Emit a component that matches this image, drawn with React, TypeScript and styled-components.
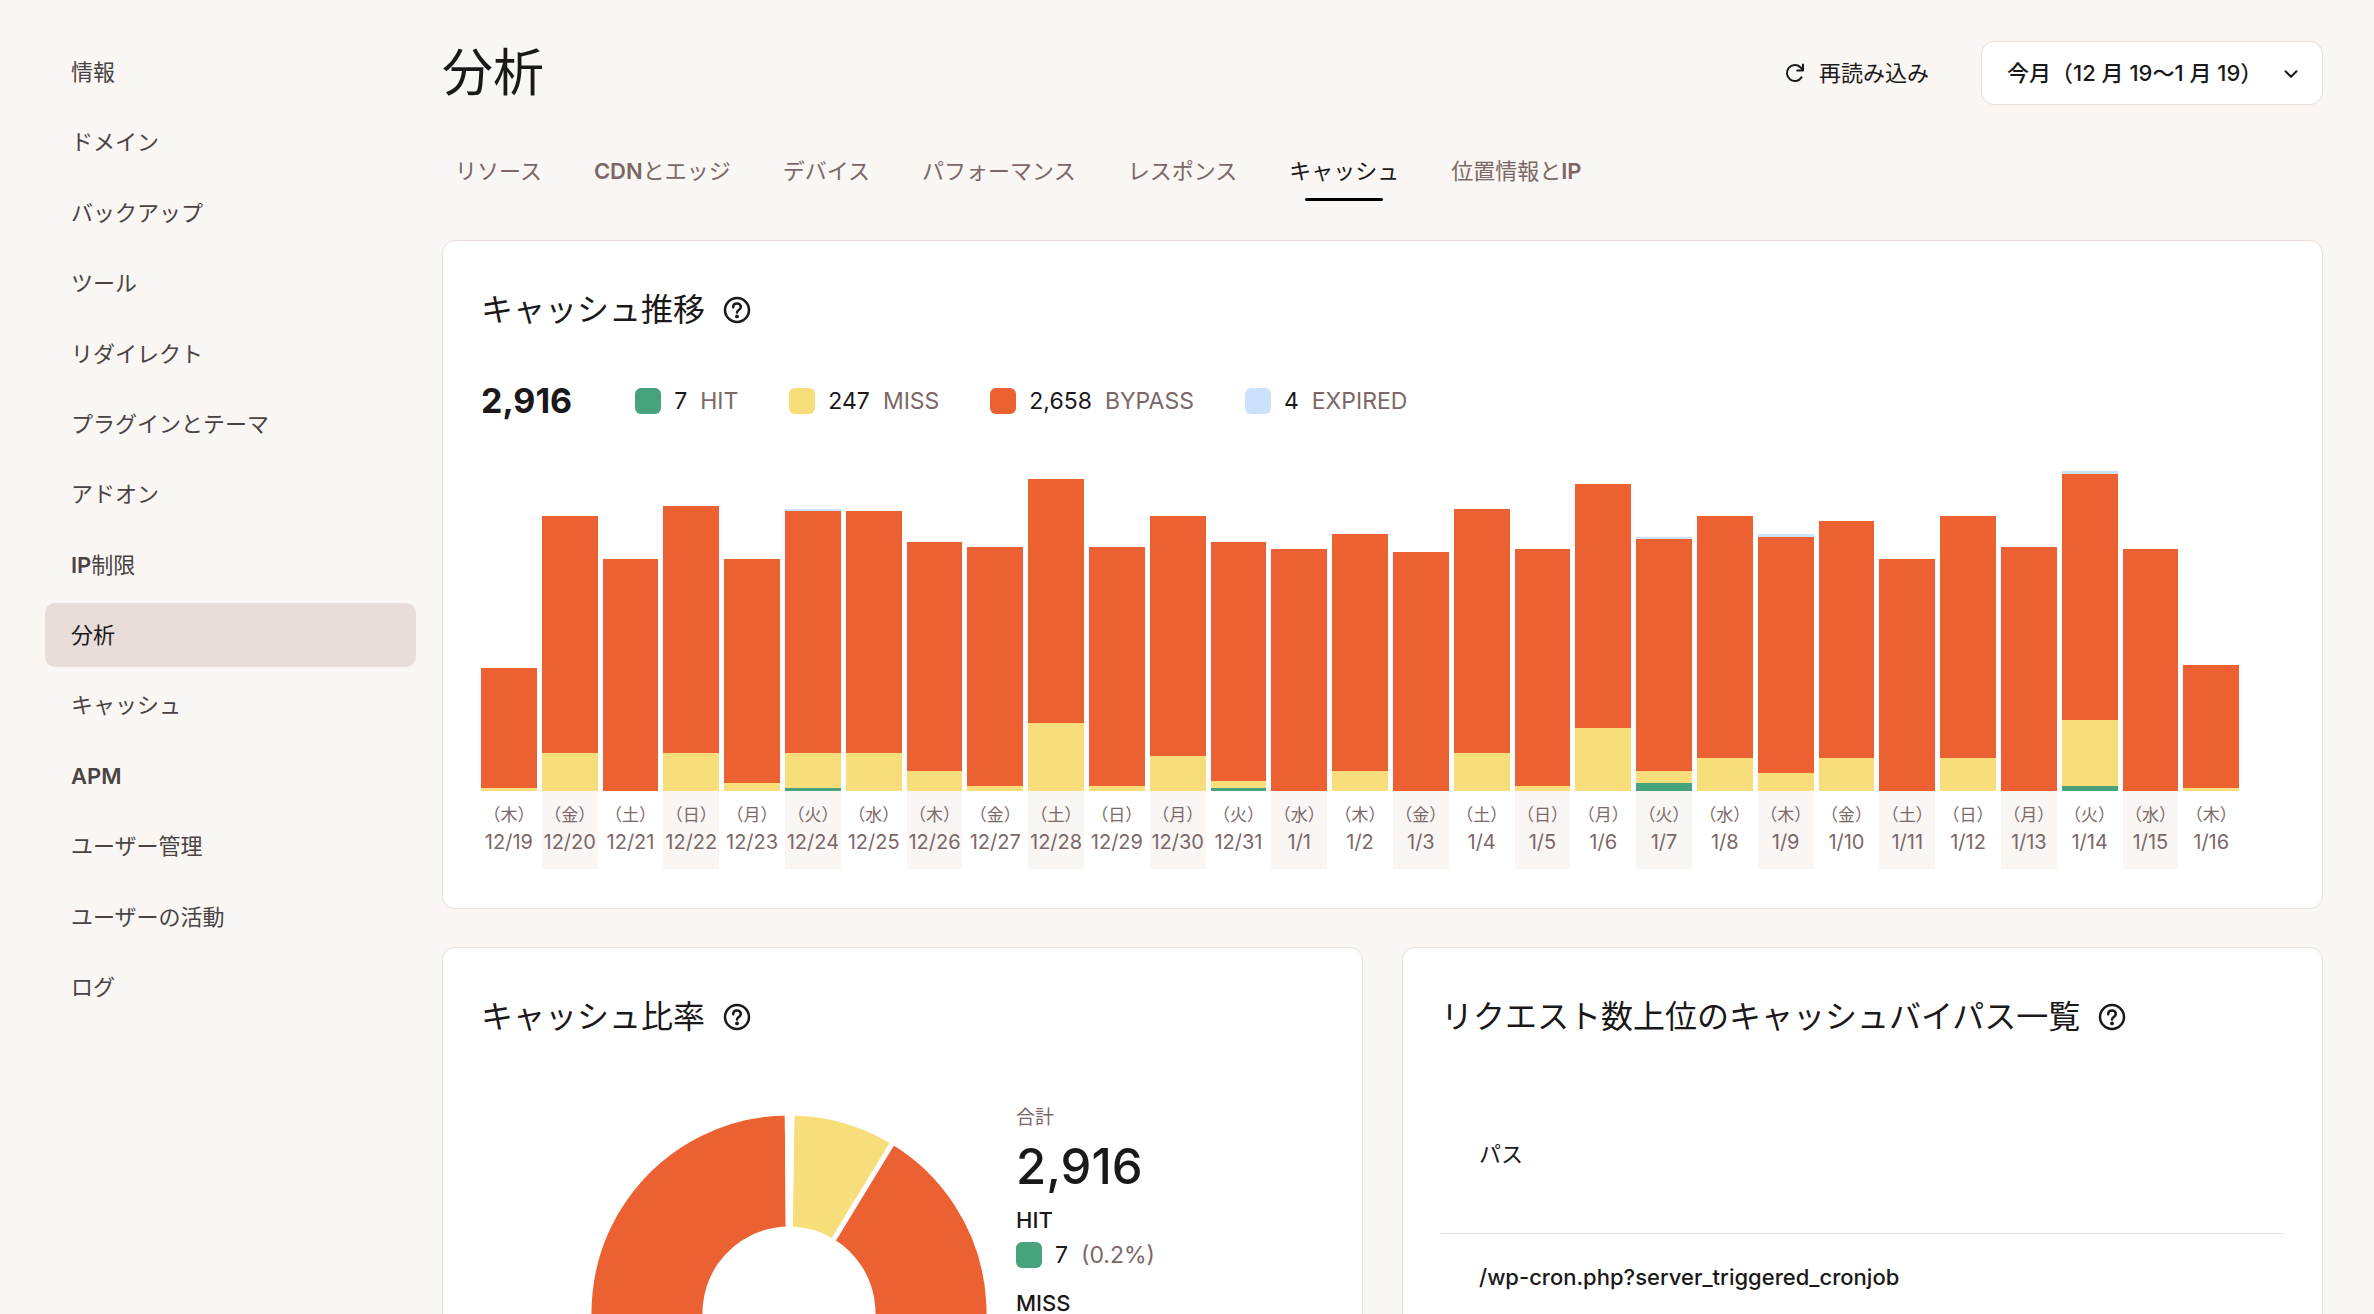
import React from 'react';
import styled, { createGlobalStyle } from 'styled-components';

const color = {
  page: '#f9f6f3',
  card: '#ffffff',
  border: '#e8ddd8',
  active: '#e8ddd9',
  stripe: '#f9f6f4',
  ink: '#1a1818',
  nav: '#4a4343',
  muted: '#7b6866',
  hit: '#48a27c',
  miss: '#f8de7b',
  bypass: '#ec6132',
  expired: '#cce2fb',
};

type Kind = 'hit' | 'miss' | 'bypass' | 'expired';

const GlobalStyle = createGlobalStyle`
  *, *::before, *::after { box-sizing: border-box; }
  body {
    margin: 0;
    background: ${color.page};
    color: ${color.ink};
    font-family: Inter, "Noto Sans CJK JP", sans-serif;
    font-size: 22px;
    line-height: 32px;
  }
  h1, h2, p, ul, dl, dd, figure { margin: 0; padding: 0; }
  button, select { font: inherit; color: inherit; }
`;

const Page = styled.div`
  display: flex;
  gap: 26px;
  height: 100vh;
  padding: 40px 51px 0 45px;
  overflow: hidden;
`;

const Sidebar = styled.nav`
  flex: 0 0 371px;
`;

const NavList = styled.ul`
  display: grid;
  grid-auto-rows: 64px;
  align-content: space-between;
  height: 979px;
  list-style: none;
`;

const NavLink = styled.a<{ $active?: boolean }>`
  display: flex;
  align-items: center;
  height: 100%;
  padding: 0 26px;
  border-radius: 10px;
  background: ${(p) => (p.$active ? color.active : 'transparent')};
  color: ${(p) => (p.$active ? color.ink : color.nav)};
  font-weight: 400;
  text-decoration: none;
`;

const Latin = styled.span`
  font-weight: 600;
`;

const Main = styled.main`
  flex: 1;
  min-width: 0;
`;

const Header = styled.header`
  display: flex;
  align-items: center;
  justify-content: space-between;
  height: 66px;
`;

const Title = styled.h1`
  font-size: 51px;
  font-weight: 400;
  line-height: 64px;
`;

const Actions = styled.div`
  display: flex;
  align-items: center;
  gap: 26px;
`;

const RefreshButton = styled.button`
  display: flex;
  align-items: center;
  gap: 14px;
  height: 64px;
  padding: 0 26px;
  border: 0;
  background: none;
`;

const SelectBox = styled.div`
  position: relative;
  width: 342px;

  svg {
    position: absolute;
    top: 25px;
    right: 24px;
    pointer-events: none;
  }
`;

const PeriodSelect = styled.select`
  appearance: none;
  width: 100%;
  height: 64px;
  padding: 0 48px 0 25px;
  border: 1px solid ${color.border};
  border-radius: 13px;
  background: ${color.card};
  font-weight: 500;
`;

const Tabs = styled.nav`
  display: flex;
  gap: 26px;
  margin: 45px 0 39px;
`;

const Tab = styled.a<{ $active?: boolean }>`
  display: flex;
  justify-content: center;
  height: 50px;
  padding: 4px 13px 0;
  position: relative;
  color: ${(p) => (p.$active ? color.ink : color.muted)};
  font-weight: 400;
  text-decoration: none;

  &::after {
    content: '';
    display: ${(p) => (p.$active ? 'block' : 'none')};
    position: absolute;
    bottom: 0;
    left: 29px;
    right: 29px;
    height: 3px;
    border-radius: 2px;
    background: #000;
  }
`;

const Card = styled.section`
  min-width: 0;
  padding: 45px 38px 39px;
  border: 1px solid ${color.border};
  border-radius: 13px;
  background: ${color.card};
`;

const CardHead = styled.div`
  display: flex;
  align-items: center;
  gap: 18px;
`;

const CardTitle = styled.h2`
  font-size: 32px;
  font-weight: 400;
  line-height: 48px;
`;

const HelpButton = styled.button`
  display: flex;
  padding: 0;
  border: 0;
  background: none;
`;

const Legend = styled.div`
  display: flex;
  align-items: center;
  gap: 51px;
  margin: 48px 0 51px;
  font-size: 23px;
  line-height: 38px;
`;

const LegendTotal = styled.strong`
  margin-right: 12px;
  font-size: 34px;
  font-weight: 700;
`;

const LegendItem = styled.span`
  display: flex;
  align-items: center;
  gap: 13px;
`;

const Swatch = styled.i<{ $kind: Kind }>`
  width: 26px;
  height: 26px;
  border-radius: 6px;
  background: ${(p) => color[p.$kind]};
`;

const Muted = styled.span`
  color: ${color.muted};
`;

const Chart = styled.figure`
  display: flex;
  gap: 5px;
  padding-right: 45px;
`;

const Day = styled.div`
  flex: 1 1 0;
  min-width: 0;
`;

const Plot = styled.div`
  display: flex;
  flex-direction: column;
  justify-content: flex-end;
  height: 320px;
`;

const Segment = styled.div<{ $kind: Kind }>`
  background: ${(p) => color[p.$kind]};
`;

const DayLabel = styled.div<{ $striped: boolean }>`
  display: flex;
  flex-direction: column;
  align-items: center;
  padding: 11px 0 13px;
  background: ${(p) => (p.$striped ? color.stripe : 'transparent')};
  color: ${color.muted};
  font-size: 20px;
  font-weight: 400;
  line-height: 27px;
  white-space: nowrap;
`;

const Weekday = styled.span`
  font-size: 17px;
`;

const Columns = styled.div`
  display: grid;
  grid-template-columns: 1fr 1fr;
  gap: 39px;
  margin-top: 38px;
`;

const RatioBody = styled.div`
  display: flex;
  justify-content: center;
  gap: 27px;
  padding-top: 61px;
`;

const DonutChart = styled.svg`
  margin-top: 11px;
`;

const RatioList = styled.dl`
  width: 200px;
`;

const RatioLabel = styled.dt<{ $small?: boolean }>`
  color: ${(p) => (p.$small ? color.muted : color.ink)};
  font-size: ${(p) => (p.$small ? 19 : 22)}px;
  font-weight: ${(p) => (p.$small ? 400 : 500)};
`;

const RatioTotal = styled.dd`
  padding-bottom: 4px;
  font-size: 49px;
  font-weight: 500;
  line-height: 66px;
`;

const RatioValue = styled.dd`
  display: flex;
  align-items: center;
  gap: 13px;
  padding: 3px 0 16px;
  font-size: 23px;
`;

const Table = styled.table`
  width: 100%;
  margin-top: 34px;
  border-collapse: collapse;
  text-align: left;

  th {
    height: 158px;
    padding: 0 38px;
    font-weight: 400;
  }

  td {
    height: 88px;
    padding: 0 38px;
    border-top: 1px solid ${color.border};
    font-weight: 500;
  }
`;

const navItems = [
  '情報', 'ドメイン', 'バックアップ', 'ツール', 'リダイレクト', 'プラグインとテーマ', 'アドオン',
  'IP制限', '分析', 'キャッシュ', 'APM', 'ユーザー管理', 'ユーザーの活動', 'ログ',
];

const tabItems = [
  'リソース', 'CDNとエッジ', 'デバイス', 'パフォーマンス', 'レスポンス', 'キャッシュ', '位置情報とIP',
];

const totals: { kind: Kind; label: string; value: number }[] = [
  { kind: 'hit', label: 'HIT', value: 7 },
  { kind: 'miss', label: 'MISS', value: 247 },
  { kind: 'bypass', label: 'BYPASS', value: 2658 },
  { kind: 'expired', label: 'EXPIRED', value: 4 },
];

const total = totals.reduce((sum, t) => sum + t.value, 0);

// date, hit, miss, bypass, expired
const days: [string, number, number, number, number][] = [
  ['12/19', 0, 1, 48, 0],
  ['12/20', 0, 15, 94, 0],
  ['12/21', 0, 0, 92, 0],
  ['12/22', 0, 15, 98, 0],
  ['12/23', 0, 3, 89, 0],
  ['12/24', 1, 14, 96, 1],
  ['12/25', 0, 15, 96, 0],
  ['12/26', 0, 8, 91, 0],
  ['12/27', 0, 2, 95, 0],
  ['12/28', 0, 27, 97, 0],
  ['12/29', 0, 2, 95, 0],
  ['12/30', 0, 14, 95, 0],
  ['12/31', 1, 3, 95, 0],
  ['1/1', 0, 0, 96, 0],
  ['1/2', 0, 8, 94, 0],
  ['1/3', 0, 0, 95, 0],
  ['1/4', 0, 15, 97, 0],
  ['1/5', 0, 2, 94, 0],
  ['1/6', 0, 25, 97, 0],
  ['1/7', 3, 5, 92, 1],
  ['1/8', 0, 13, 96, 0],
  ['1/9', 0, 7, 94, 1],
  ['1/10', 0, 13, 94, 0],
  ['1/11', 0, 0, 92, 0],
  ['1/12', 0, 13, 96, 0],
  ['1/13', 0, 0, 97, 0],
  ['1/14', 2, 26, 98, 1],
  ['1/15', 0, 0, 96, 0],
  ['1/16', 0, 1, 49, 0],
];

const weekdays = ['木', '金', '土', '日', '月', '火', '水'];
const peak = Math.max(...days.map(([, h, m, b, e]) => h + m + b + e));

// Latin runs are set heavier than the Japanese text around them.
function MixedText({ text }: { text: string }) {
  return (
    <span>
      {text.split(/([A-Za-z]+)/).filter(Boolean).map((part, i) =>
        /^[A-Za-z]/.test(part) ? <Latin key={i}>{part}</Latin> : part,
      )}
    </span>
  );
}

function HelpIcon() {
  return (
    <svg width="28" height="28" viewBox="0 0 28 28" fill="none" stroke="currentColor" strokeWidth="2.5" aria-hidden="true">
      <circle cx="14" cy="14" r="12" />
      <path d="M10.2 11.2c0-2.2 1.6-3.7 3.8-3.7s3.8 1.5 3.8 3.5c0 1.6-.9 2.3-2 3.1-1.2.9-1.8 1.4-1.8 2.4" strokeLinecap="round" />
      <circle cx="14" cy="20.4" r="1.9" fill="currentColor" stroke="none" />
    </svg>
  );
}

function RefreshIcon() {
  return (
    <svg width="20" height="20" viewBox="0 0 20 20" fill="none" stroke="currentColor" strokeWidth="2" aria-hidden="true">
      <path d="M16.6 14.4A8 8 0 1 1 15.4 4.2l2.2 2.6" strokeLinecap="round" />
      <path d="M18 1.6v5.8h-5.8" strokeLinecap="round" strokeLinejoin="round" />
    </svg>
  );
}

function ChevronIcon() {
  return (
    <svg width="16" height="16" viewBox="0 0 16 16" fill="none" stroke={color.ink} strokeWidth="2" aria-hidden="true">
      <path d="M2.5 5.2 8 10.8l5.5-5.6" strokeLinecap="round" strokeLinejoin="round" />
    </svg>
  );
}

function CardHeading({ children }: { children: React.ReactNode }) {
  return (
    <CardHead>
      <CardTitle>{children}</CardTitle>
      <HelpButton type="button" aria-label="ヘルプ">
        <HelpIcon />
      </HelpButton>
    </CardHead>
  );
}

function Donut() {
  const outer = 200;
  const inner = 84;
  const point = (r: number, turn: number) => {
    const a = turn * Math.PI * 2;
    return `${200 + r * Math.sin(a)} ${200 - r * Math.cos(a)}`;
  };
  let start = 0;
  return (
    <DonutChart width="400" height="400" viewBox="0 0 400 400" role="img" aria-label="キャッシュ比率">
      {totals.map(({ kind, value }) => {
        const from = start;
        const to = from + value / total;
        start = to;
        const large = to - from > 0.5 ? 1 : 0;
        return (
          <path
            key={kind}
            d={`M${point(outer, from)}A${outer} ${outer} 0 ${large} 1 ${point(outer, to)}L${point(inner, to)}A${inner} ${inner} 0 ${large} 0 ${point(inner, from)}Z`}
            fill={color[kind]}
            stroke="#fff"
            strokeWidth="5"
          />
        );
      })}
    </DonutChart>
  );
}

export default function App() {
  return (
    <>
      <GlobalStyle />
      <Page>
        <Sidebar>
          <NavList>
            {navItems.map((item) => (
              <li key={item}>
                <NavLink href="#" $active={item === '分析'}>
                  <MixedText text={item} />
                </NavLink>
              </li>
            ))}
          </NavList>
        </Sidebar>
        <Main>
          <Header>
            <Title>分析</Title>
            <Actions>
              <RefreshButton type="button">
                <RefreshIcon />
                再読み込み
              </RefreshButton>
              <SelectBox>
                <PeriodSelect aria-label="期間">
                  <option>今月（12 月 19〜1 月 19）</option>
                </PeriodSelect>
                <ChevronIcon />
              </SelectBox>
            </Actions>
          </Header>
          <Tabs>
            {tabItems.map((item) => (
              <Tab key={item} href="#" $active={item === 'キャッシュ'}>
                <MixedText text={item} />
              </Tab>
            ))}
          </Tabs>
          <Card>
            <CardHeading>キャッシュ推移</CardHeading>
            <Legend>
              <LegendTotal>{total.toLocaleString('en-US')}</LegendTotal>
              {totals.map(({ kind, label, value }) => (
                <LegendItem key={kind}>
                  <Swatch $kind={kind} />
                  <span>{value.toLocaleString('en-US')}</span>
                  <Muted>{label}</Muted>
                </LegendItem>
              ))}
            </Legend>
            <Chart>
              {days.map(([date, hit, miss, bypass, expired], i) => (
                <Day key={date}>
                  <Plot>
                    <Segment $kind="expired" style={{ height: `${(expired / peak) * 100}%` }} />
                    <Segment $kind="bypass" style={{ height: `${(bypass / peak) * 100}%` }} />
                    <Segment $kind="miss" style={{ height: `${(miss / peak) * 100}%` }} />
                    <Segment $kind="hit" style={{ height: `${(hit / peak) * 100}%` }} />
                  </Plot>
                  <DayLabel $striped={i % 2 === 1}>
                    <Weekday>（{weekdays[i % 7]}）</Weekday>
                    <span>{date}</span>
                  </DayLabel>
                </Day>
              ))}
            </Chart>
          </Card>
          <Columns>
            <Card>
              <CardHeading>キャッシュ比率</CardHeading>
              <RatioBody>
                <Donut />
                <RatioList>
                  <RatioLabel $small>合計</RatioLabel>
                  <RatioTotal>{total.toLocaleString('en-US')}</RatioTotal>
                  {totals.map(({ kind, label, value }) => (
                    <React.Fragment key={kind}>
                      <RatioLabel>{label}</RatioLabel>
                      <RatioValue>
                        <Swatch $kind={kind} />
                        <span>{value.toLocaleString('en-US')}</span>
                        <Muted>({((value / total) * 100).toFixed(1)}%)</Muted>
                      </RatioValue>
                    </React.Fragment>
                  ))}
                </RatioList>
              </RatioBody>
            </Card>
            <Card>
              <CardHeading>リクエスト数上位のキャッシュバイパス一覧</CardHeading>
              <Table>
                <thead>
                  <tr>
                    <th scope="col">パス</th>
                  </tr>
                </thead>
                <tbody>
                  <tr>
                    <td>/wp-cron.php?server_triggered_cronjob</td>
                  </tr>
                </tbody>
              </Table>
            </Card>
          </Columns>
        </Main>
      </Page>
    </>
  );
}
